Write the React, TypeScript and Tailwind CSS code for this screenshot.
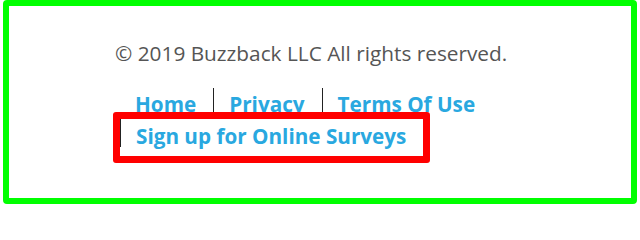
import React from "react";

const linkCls =
  "text-[20.7px] leading-[30px] font-bold text-[#29a8e0] whitespace-nowrap";

export default function App() {
  return (
    <div className="relative w-[640px] h-[207px] bg-white overflow-hidden [font-family:'Open_Sans',sans-serif]">
      <div className="ml-[3px] w-[634px] h-[204px] border-[6px] border-[#00ff00] rounded-[4px] pl-[106px] pt-[33px]">
        <p className="text-[20.8px] leading-[28px] text-[#555555] whitespace-nowrap">
          © 2019 Buzzback LLC All rights reserved.
        </p>
        <ul className="ml-[5px] mt-[21px] w-[440px] flex flex-wrap">
          <li className="h-[31px] flex items-center pl-[15px] pr-[17px]">
            <a className={linkCls}>Home</a>
          </li>
          <li className="h-[31px] flex items-center pl-[15px] pr-[17px] border-l border-[#222222]">
            <a className={linkCls}>Privacy</a>
          </li>
          <li className="h-[31px] flex items-center pl-[15px] pr-[17px] border-l border-[#222222]">
            <a className={linkCls}>Terms Of Use</a>
          </li>
          <li className="relative h-[28px] flex items-start pl-[15px] pr-[17px] border-l border-[#222222]">
            <a className={`${linkCls} mt-[2px]`}>Sign up for Online Surveys</a>
            <div className="absolute left-[-8px] top-[-7px] w-[317px] h-[51px] border-[7px] border-[#ff0000] rounded-[3px]" />
          </li>
        </ul>
      </div>
    </div>
  );
}
